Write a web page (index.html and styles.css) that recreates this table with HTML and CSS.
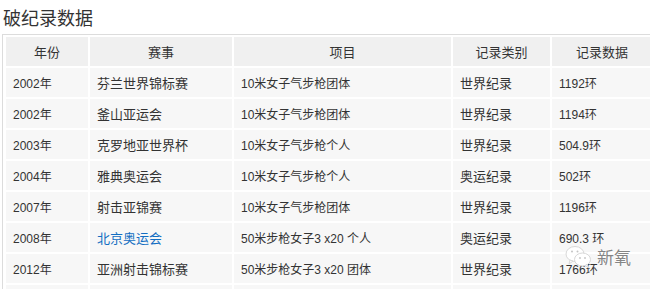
FILE: index.html
```html
<!DOCTYPE html>
<html lang="zh">
<head>
<meta charset="utf-8">
<link rel="stylesheet" href="styles.css">
</head>
<body>
<div class="page">
  <h2 class="title">破纪录数据</h2>
  <div class="table-wrap">
    <table class="records">
      <thead>
        <tr><th class="c1">年份</th><th class="c2">赛事</th><th class="c3">项目</th><th class="c4">记录类别</th><th class="c5">记录数据</th></tr>
      </thead>
      <tbody>
        <tr><td>2002年</td><td>芬兰世界锦标赛</td><td>10米女子气步枪团体</td><td>世界纪录</td><td>1192环</td></tr>
        <tr><td>2002年</td><td>釜山亚运会</td><td>10米女子气步枪团体</td><td>世界纪录</td><td>1194环</td></tr>
        <tr><td>2003年</td><td>克罗地亚世界杯</td><td>10米女子气步枪个人</td><td>世界纪录</td><td>504.9环</td></tr>
        <tr><td>2004年</td><td>雅典奥运会</td><td>10米女子气步枪个人</td><td>奥运纪录</td><td>502环</td></tr>
        <tr><td>2007年</td><td>射击亚锦赛</td><td>10米女子气步枪团体</td><td>世界纪录</td><td>1196环</td></tr>
        <tr><td>2008年</td><td><a class="link" href="#">北京奥运会</a></td><td>50米步枪女子3 x20 个人</td><td>奥运纪录</td><td>690.3 环</td></tr>
        <tr><td>2012年</td><td>亚洲射击锦标赛</td><td>50米步枪女子3 x20 团体</td><td>世界纪录</td><td>1766环</td></tr>
        <tr><td>&nbsp;</td><td></td><td></td><td></td><td></td></tr>
      </tbody>
    </table>
    <div class="watermark">
      <svg class="wx" width="28" height="24" viewBox="0 0 28 24">
        <ellipse cx="10" cy="9" rx="9" ry="7.5" fill="#fff" stroke="#d8d8d8" stroke-width="1"/>
        <path d="M5 15 L4 19 L8 16 Z" fill="#fff" stroke="#d8d8d8" stroke-width="1"/>
        <ellipse cx="17.5" cy="14.5" rx="8" ry="6.5" fill="#fff" stroke="#d8d8d8" stroke-width="1"/>
        <path d="M22 19.5 L24 23 L20 20.5 Z" fill="#fff" stroke="#d8d8d8" stroke-width="1"/>
        <circle cx="7" cy="6.5" r="1" fill="#c4c4c4"/>
        <circle cx="12.5" cy="6.5" r="1" fill="#c4c4c4"/>
        <circle cx="15" cy="13" r="0.9" fill="#c4c4c4"/>
        <circle cx="20" cy="13" r="0.9" fill="#c4c4c4"/>
      </svg>
      <span class="wm-text">新氧</span>
    </div>
  </div>
</div>
</body>
</html>
```

FILE: styles.css
```css
html, body {
  margin: 0;
  padding: 0;
  background: #fff;
}
.page {
  width: 650px;
  height: 289px;
  overflow: hidden;
  font-family: "Liberation Sans", "Noto Sans CJK SC", sans-serif;
  color: #333;
}
.title {
  margin: 0;
  padding: 7px 0 0 3px;
  height: 34px;
  box-sizing: border-box;
  font-size: 18px;
  font-weight: normal;
  line-height: 24px;
  color: #333;
}
.table-wrap {
  position: relative;
  padding-left: 2px;
  width: 700px;
}
.records {
  border-collapse: separate;
  border-spacing: 2px;
  border: 1px solid #dcdcdc;
  padding: 0 0 0 1px;
  font-size: 12px;
}
.c1 { width: 82px; }
.c2 { width: 142px; }
.c3 { width: 217px; }
.c4 { width: 97px; }
.c5 { width: 100px; }
.records th,
.records td {
  height: 29px;
  padding: 0 7px;
  box-sizing: border-box;
  white-space: nowrap;
}
.records th {
  background: #f0f0f0;
  font-weight: normal;
  font-size: 13px;
  text-align: center;
}
.records td {
  background: #f7f7f7;
  text-align: left;
}
.link {
  color: #136ec2;
  text-decoration: none;
  font-size: 13px;
}
.records td:nth-child(2),
.records td:nth-child(4) {
  font-size: 13px;
}
.watermark {
  position: absolute;
  left: 565px;
  top: 210px;
  display: flex;
  align-items: center;
  gap: 4px;
}
.wx {
  display: block;
}
.wm-text {
  font-family: "Noto Sans CJK SC", sans-serif;
  font-size: 17px;
  color: #858585;
  text-shadow: 0 0 2px #fff, 0 0 2px #fff;
}
```
